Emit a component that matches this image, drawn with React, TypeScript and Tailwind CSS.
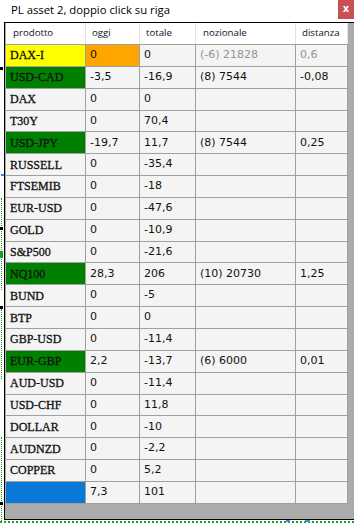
import React from "react";

type Row = {
  name: string;
  nameBg?: string;
  oggi: string;
  oggiBg?: string;
  totale: string;
  noz?: string;
  dist?: string;
  muted?: boolean;
};

const rows: Row[] = [
  { name: "DAX-I", nameBg: "bg-[#ffff00]", oggi: "0", oggiBg: "bg-[#ffa500]", totale: "0", noz: "(-6) 21828", dist: "0,6", muted: true },
  { name: "USD-CAD", nameBg: "bg-[#008000]", oggi: "-3,5", totale: "-16,9", noz: "(8) 7544", dist: "-0,08" },
  { name: "DAX", oggi: "0", totale: "0" },
  { name: "T30Y", oggi: "0", totale: "70,4" },
  { name: "USD-JPY", nameBg: "bg-[#008000]", oggi: "-19,7", totale: "11,7", noz: "(8) 7544", dist: "0,25" },
  { name: "RUSSELL", oggi: "0", totale: "-35,4" },
  { name: "FTSEMIB", oggi: "0", totale: "-18" },
  { name: "EUR-USD", oggi: "0", totale: "-47,6" },
  { name: "GOLD", oggi: "0", totale: "-10,9" },
  { name: "S&P500", oggi: "0", totale: "-21,6" },
  { name: "NQ100", nameBg: "bg-[#008000]", oggi: "28,3", totale: "206", noz: "(10) 20730", dist: "1,25" },
  { name: "BUND", oggi: "0", totale: "-5" },
  { name: "BTP", oggi: "0", totale: "0" },
  { name: "GBP-USD", oggi: "0", totale: "-11,4" },
  { name: "EUR-GBP", nameBg: "bg-[#008000]", oggi: "2,2", totale: "-13,7", noz: "(6) 6000", dist: "0,01" },
  { name: "AUD-USD", oggi: "0", totale: "-11,4" },
  { name: "USD-CHF", oggi: "0", totale: "11,8" },
  { name: "DOLLAR", oggi: "0", totale: "-10" },
  { name: "AUDNZD", oggi: "0", totale: "-2,2" },
  { name: "COPPER", oggi: "0", totale: "5,2" },
  { name: "", nameBg: "bg-[#0a78d7]", oggi: "7,3", totale: "101" },
];

const serif = { fontFamily: '"Liberation Serif", serif' };
const num = { fontFamily: '"DejaVu Sans", sans-serif' };
const sans = { fontFamily: '"Open Sans", sans-serif' };

function Cell({ w, bg, children, font, muted, name }: { w: string; bg?: string; children?: React.ReactNode; font: React.CSSProperties; muted?: boolean; name?: boolean }) {
  return (
    <div
      className={`${w} ${bg ?? "bg-[#f4f4f4]"} shrink-0 h-full border-r border-b border-[#a0a0a0] flex items-center pl-[4px] ${name ? "text-[12px] [-webkit-text-stroke:0.3px_#111]" : "text-[11px]"} ${muted ? "text-[#939393]" : "text-[#111]"} whitespace-nowrap overflow-hidden`}
      style={font}
    >
      {children}
    </div>
  );
}

function HeadCell({ w, children, pl }: { w: string; children: React.ReactNode; pl: string }) {
  return (
    <div className={`${w} ${pl} shrink-0 h-full bg-white border-r border-[#e3e3e3] flex items-center text-[9.7px] text-[#10102a]`} style={sans}>
      {children}
    </div>
  );
}

export default function App() {
  return (
    <div className="relative w-[354px] h-[523px] bg-white overflow-hidden">
      {/* title bar */}
      <div className="flex items-start justify-between h-[22px]">
        <div className="pl-[11px] pt-[2px] text-[11.3px] text-black leading-[16px]" style={sans}>
          PL asset 2, doppio click su riga
        </div>
        <div className="w-[16px] h-[19px] bg-[#c75050] flex items-center justify-center text-white text-[10px] font-bold leading-none pb-[2px]" style={{ fontFamily: '"DejaVu Sans", sans-serif' }}>
          x
        </div>
      </div>

      {/* grid window */}
      <div className="ml-[4px] h-[498px] border-l border-t border-b border-black bg-[#ababab] pl-[1px] flex flex-col">
        <div className="flex h-[22px] border-b border-[#a0a0a0] w-[342px] shrink-0">
          <HeadCell w="w-[80px]" pl="pl-[7px]">prodotto</HeadCell>
          <HeadCell w="w-[54px]" pl="pl-[6px]">oggi</HeadCell>
          <HeadCell w="w-[56px]" pl="pl-[6px]">totale</HeadCell>
          <HeadCell w="w-[100px]" pl="pl-[7px]">nozionale</HeadCell>
          <HeadCell w="w-[52px]" pl="pl-[6px]">distanza</HeadCell>
        </div>
        {rows.map((r, i) => (
          <div key={i} className="flex h-[21.85px] shrink-0 w-[342px]">
            <Cell w="w-[80px]" bg={r.nameBg} font={serif} name>
              {r.name}
            </Cell>
            <Cell w="w-[54px]" bg={r.oggiBg} font={num}>
              {r.oggi}
            </Cell>
            <Cell w="w-[56px]" font={num}>
              {r.totale}
            </Cell>
            <Cell w="w-[100px]" font={num} muted={r.muted}>
              {r.noz}
            </Cell>
            <Cell w="w-[52px]" font={num} muted={r.muted}>
              {r.dist}
            </Cell>
          </div>
        ))}
      </div>

      {/* bottom dotted edge of the window behind */}
      <div className="mt-[1px] h-[2px] border-t-2 border-dotted border-[#1e9e1e]" />

      {/* stray marks of the windows behind */}
      <div className="absolute left-0 top-[67px] w-[3px] h-[3px] bg-black" />
      <div className="absolute left-[1px] top-[174px] w-[3px] h-[2px] bg-[#3a8ee6]" />
      <div className="absolute left-[1px] top-[198px] h-[92px] border-l border-dotted border-[#1e9e1e]" />
      <div className="absolute left-0 top-[227px] w-[3px] h-[3px] bg-black" />
      <div className="absolute left-0 top-[251px] w-[3px] h-[7px] bg-[#1e9e1e]" />
      <div className="absolute left-0 top-[306px] w-[3px] h-[3px] bg-black" />
      <div className="absolute left-[1px] top-[309px] h-[70px] border-l border-dotted border-[#1e9e1e]" />
      <div className="absolute left-[1px] top-[437px] h-[84px] border-l border-dotted border-[#1e9e1e]" />
      <div className="absolute left-0 top-[502px] w-[3px] h-[3px] bg-black" />
      <div className="absolute left-[286px] top-[520px] w-[4px] h-[2px] bg-[#3a8ee6]" />
      <div className="absolute left-[305px] top-[520px] w-[5px] h-[2px] bg-[#3a8ee6]" />
    </div>
  );
}
